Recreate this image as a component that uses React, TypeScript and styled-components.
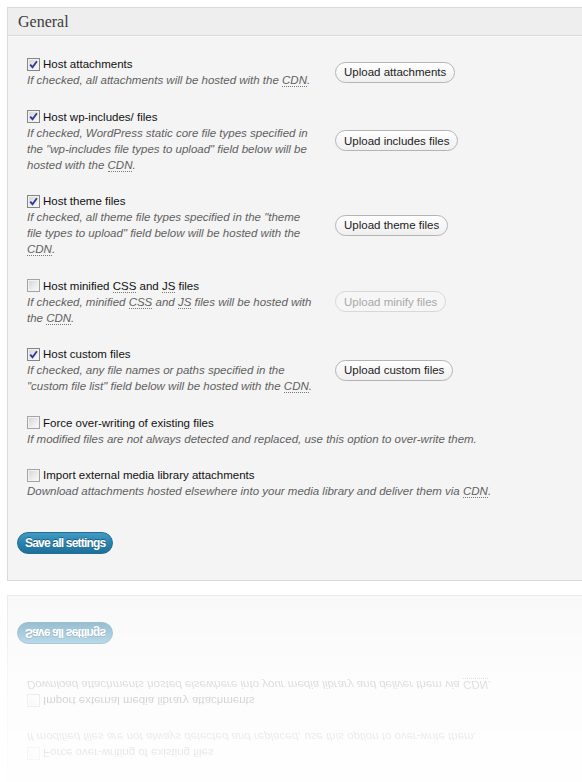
import styled, { createGlobalStyle } from 'styled-components';
import type { ReactNode } from 'react';

const GlobalStyle = createGlobalStyle`
  html, body {
    margin: 0;
    padding: 0;
    background: #ffffff;
    overflow: hidden;
  }
  body {
    font-family: "Liberation Sans", Arial, sans-serif;
    font-size: 11.5px;
    color: #333;
  }
`;

const Page = styled.div`
  padding: 7px 0 0 7px;
`;

const Postbox = styled.div<{ $mirror?: boolean }>`
  border: 1px solid #d9d9d9;
  border-right: none;
  background: #f4f4f4;
  transform: ${p => (p.$mirror ? 'scaleY(-1)' : 'none')};
`;

// faded mirror image of the panel, as on a glossy floor
const Reflection = styled.div`
  margin-top: 14px;
  height: 190px;
  overflow: hidden;
  pointer-events: none;
  user-select: none;
  mask-image: linear-gradient(
    to bottom,
    rgba(0, 0, 0, 0.55) 0px,
    rgba(0, 0, 0, 0.42) 37px,
    rgba(0, 0, 0, 0.22) 85px,
    rgba(0, 0, 0, 0.1) 157px,
    rgba(0, 0, 0, 0.04) 190px
  );
`;

const PostboxHeader = styled.h3`
  margin: 0;
  height: 27px;
  line-height: 28px;
  padding: 0 10px;
  background: #eeeeee;
  border-bottom: 1px solid #dadada;
  font-family: "Liberation Serif", "DejaVu Serif", Georgia, serif;
  font-size: 16px;
  font-weight: normal;
  color: #3c3c3c;
`;

const Inside = styled.div`
  border-top: 1px solid #fafafa;
  padding: 19px 0 26px 9px;
`;

const OptionList = styled.div`
  display: flex;
  flex-direction: column;
  gap: 20.5px;
  padding-left: 10px;
`;

const OptionRow = styled.div`
  display: flex;
  align-items: center;
`;

const OptionText = styled.div<{ $wide?: boolean }>`
  width: ${p => (p.$wide ? 'auto' : '288px')};
  margin-right: ${p => (p.$wide ? '0' : '20px')};
  line-height: 16px;
`;

const Label = styled.label`
  display: flex;
  align-items: center;
  gap: 3px;
  color: #111;
`;

const Box = styled.span<{ $checked: boolean }>`
  width: 11px;
  height: 11px;
  flex: none;
  display: inline-flex;
  align-items: center;
  justify-content: center;
  border: 1px solid ${p => (p.$checked ? '#858585' : '#a4a4a4')};
  background: linear-gradient(135deg, #d2d2d2 0%, #ebebeb 55%, #fbfbfb 100%);
  box-shadow: inset 0 0 0 1px #f2f2f2;
`;

const Description = styled.div`
  color: #616161;
  font-style: italic;
`;

const Abbr = styled.abbr`
  text-decoration: none;
  border-bottom: 1px dotted #777;
`;

const PillButton = styled.button`
  height: 21px;
  padding: 0 8px;
  border: 1px solid #b4b4b4;
  border-radius: 11px;
  background: linear-gradient(to bottom, #ffffff, #efefef);
  font-family: "Liberation Sans", Arial, sans-serif;
  font-size: 11.5px;
  color: #222;
  white-space: nowrap;

  &:disabled {
    color: #a8a8a8;
    border-color: #d8d8d8;
    background: #f6f6f6;
  }
`;

const SaveButton = styled.button`
  margin-top: 33px;
  height: 22px;
  padding: 0 7px;
  border: 1px solid #1f6f94;
  border-radius: 11px;
  background: linear-gradient(to bottom, #429bc5 0%, #2a82ad 50%, #1f7099 100%);
  font-family: "Liberation Sans", Arial, sans-serif;
  font-size: 12px;
  font-weight: bold;
  letter-spacing: -0.8px;
  color: #ffffff;
  text-shadow: 0 -1px 0 rgba(0, 0, 0, 0.35);
`;

function Checkbox({ checked }: { checked: boolean }) {
  return (
    <Box $checked={checked}>
      {checked && (
        <svg width="9" height="9" viewBox="0 0 9 9">
          <path d="M1.2 4.6 L3.5 7.2 L7.9 1.2" fill="none" stroke="#2b3a9c" strokeWidth="1.8" />
        </svg>
      )}
    </Box>
  );
}

const CDN = <Abbr title="Content Delivery Network">CDN</Abbr>;
const CSS = <Abbr title="Cascading Style Sheet">CSS</Abbr>;
const JS = <Abbr title="JavaScript">JS</Abbr>;

interface Option {
  label: ReactNode;
  checked: boolean;
  description: ReactNode;
  button?: string;
  disabled?: boolean;
}

const OPTIONS: Option[] = [
  {
    label: 'Host attachments',
    checked: true,
    description: <>If checked, all attachments will be hosted with the {CDN}.</>,
    button: 'Upload attachments',
  },
  {
    label: 'Host wp-includes/ files',
    checked: true,
    description: (
      <>
        If checked, WordPress static core file types specified in the "wp-includes file types to upload" field below
        will be hosted with the {CDN}.
      </>
    ),
    button: 'Upload includes files',
  },
  {
    label: 'Host theme files',
    checked: true,
    description: (
      <>
        If checked, all theme file types specified in the "theme file types to upload" field below will be hosted with
        the {CDN}.
      </>
    ),
    button: 'Upload theme files',
  },
  {
    label: <>Host minified {CSS} and {JS} files</>,
    checked: false,
    description: <>If checked, minified {CSS} and {JS} files will be hosted with the {CDN}.</>,
    button: 'Upload minify files',
    disabled: true,
  },
  {
    label: 'Host custom files',
    checked: true,
    description: (
      <>
        If checked, any file names or paths specified in the "custom file list" field below will be hosted with the{' '}
        {CDN}.
      </>
    ),
    button: 'Upload custom files',
  },
  {
    label: 'Force over-writing of existing files',
    checked: false,
    description: <>If modified files are not always detected and replaced, use this option to over-write them.</>,
  },
  {
    label: 'Import external media library attachments',
    checked: false,
    description: <>Download attachments hosted elsewhere into your media library and deliver them via {CDN}.</>,
  },
];

function GeneralPanel({ mirror }: { mirror?: boolean }) {
  return (
    <Postbox $mirror={mirror}>
      <PostboxHeader>General</PostboxHeader>
      <Inside>
        <OptionList>
          {OPTIONS.map((opt, i) => (
            <OptionRow key={i}>
              <OptionText $wide={!opt.button}>
                <Label>
                  <Checkbox checked={opt.checked} />
                  <span>{opt.label}</span>
                </Label>
                <Description>{opt.description}</Description>
              </OptionText>
              {opt.button && <PillButton disabled={opt.disabled}>{opt.button}</PillButton>}
            </OptionRow>
          ))}
        </OptionList>
        <SaveButton>Save all settings</SaveButton>
      </Inside>
    </Postbox>
  );
}

export default function App() {
  return (
    <>
      <GlobalStyle />
      <Page>
        <GeneralPanel />
        <Reflection aria-hidden="true">
          <GeneralPanel mirror />
        </Reflection>
      </Page>
    </>
  );
}
